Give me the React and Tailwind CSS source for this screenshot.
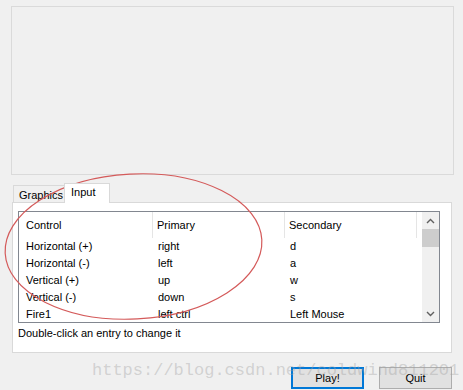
import React from "react";

const rows = [
  ["Horizontal (+)", "right", "d"],
  ["Horizontal (-)", "left", "a"],
  ["Vertical (+)", "up", "w"],
  ["Vertical (-)", "down", "s"],
  ["Fire1", "left ctrl", "Left Mouse"],
];

const Chevron = ({ up }) => (
  <svg width="9" height="6" viewBox="0 0 9 6" className="block">
    <path
      d={up ? "M1 5 L4.5 1.5 L8 5" : "M1 1 L4.5 4.5 L8 1"}
      fill="none"
      stroke="#606060"
      strokeWidth="1.4"
    />
  </svg>
);

export default function App() {
  return (
    <div className="relative w-[463px] h-[390px] overflow-hidden bg-[#f0f0f0] text-[11px] leading-[16px] text-black font-['Liberation_Sans',Arial,sans-serif]">
      {/* preview area */}
      <div className="ml-[11px] mt-[6px] w-[443px] h-[169px] border border-[#dadada]" />

      {/* tabs */}
      <div className="ml-[13px] mt-[8px] flex items-end h-[19px]">
        <div className="h-[17px] w-[51px] pl-[5px] border-l border-t border-[#d9d9d9] bg-[#f0f0f0] leading-[18px]">
          Graphics
        </div>
        <div className="relative z-10 h-[20px] -mb-px w-[46px] pl-[6px] border-x border-t border-[#d9d9d9] bg-white leading-[17px]">
          Input
        </div>
      </div>

      {/* tab page */}
      <div className="ml-[12px] w-[440px] h-[151px] border border-[#d9d9d9] bg-white pl-[5px] pt-[8px]">
        <div className="w-[422px] h-[112px] border border-[#828790] flex overflow-hidden">
          <div className="w-[403px] overflow-hidden">
            <div className="flex h-[26px] leading-[26px]">
              <div className="w-[134px] pl-[7px] border-r border-[#e5e5e5]">Control</div>
              <div className="w-[132px] pl-[4px] border-r border-[#e5e5e5]">Primary</div>
              <div className="w-[132px] pl-[4px] border-r border-[#e5e5e5]">Secondary</div>
            </div>
            {rows.map((r) => (
              <div key={r[0]} className="flex h-[17px] leading-[17px]">
                <div className="w-[134px] pl-[7px]">{r[0]}</div>
                <div className="w-[132px] pl-[5px]">{r[1]}</div>
                <div className="w-[132px] pl-[5px]">{r[2]}</div>
              </div>
            ))}
          </div>
          <div className="w-[17px] bg-[#f0f0f0] flex flex-col">
            <div className="h-[17px] flex items-center justify-center">
              <Chevron up />
            </div>
            <div className="h-[18px] bg-[#cdcdcd]" />
            <div className="flex-1" />
            <div className="h-[17px] flex items-center justify-center">
              <Chevron />
            </div>
          </div>
        </div>
        <div className="mt-[2px]">Double-click an entry to change it</div>
      </div>

      {/* buttons */}
      <div className="mt-[14px] pr-[11px] flex justify-end gap-[15px]">
        <button className="w-[73px] h-[22px] border-2 border-[#0078d7] bg-[#e1e1e1] leading-[16px]">
          Play!
        </button>
        <button className="w-[73px] h-[22px] border border-[#adadad] bg-[#e1e1e1] leading-[16px]">
          Quit
        </button>
      </div>

      {/* watermark */}
      <div className="absolute left-[92px] top-[361px] pointer-events-none whitespace-nowrap text-[17px] leading-[20px] text-[#a0a0a0]/40 font-['Liberation_Mono',monospace]">
        https://blog.csdn.net/coldwind811201
      </div>

      {/* annotation */}
      <svg className="absolute left-0 top-0 pointer-events-none" width="463" height="390">
        <ellipse
          cx="133.5"
          cy="246.5"
          rx="128.5"
          ry="72.5"
          fill="none"
          stroke="#d45a5a"
          strokeWidth="1.2"
          transform="rotate(-3 133.5 246.5)"
        />
      </svg>
    </div>
  );
}
